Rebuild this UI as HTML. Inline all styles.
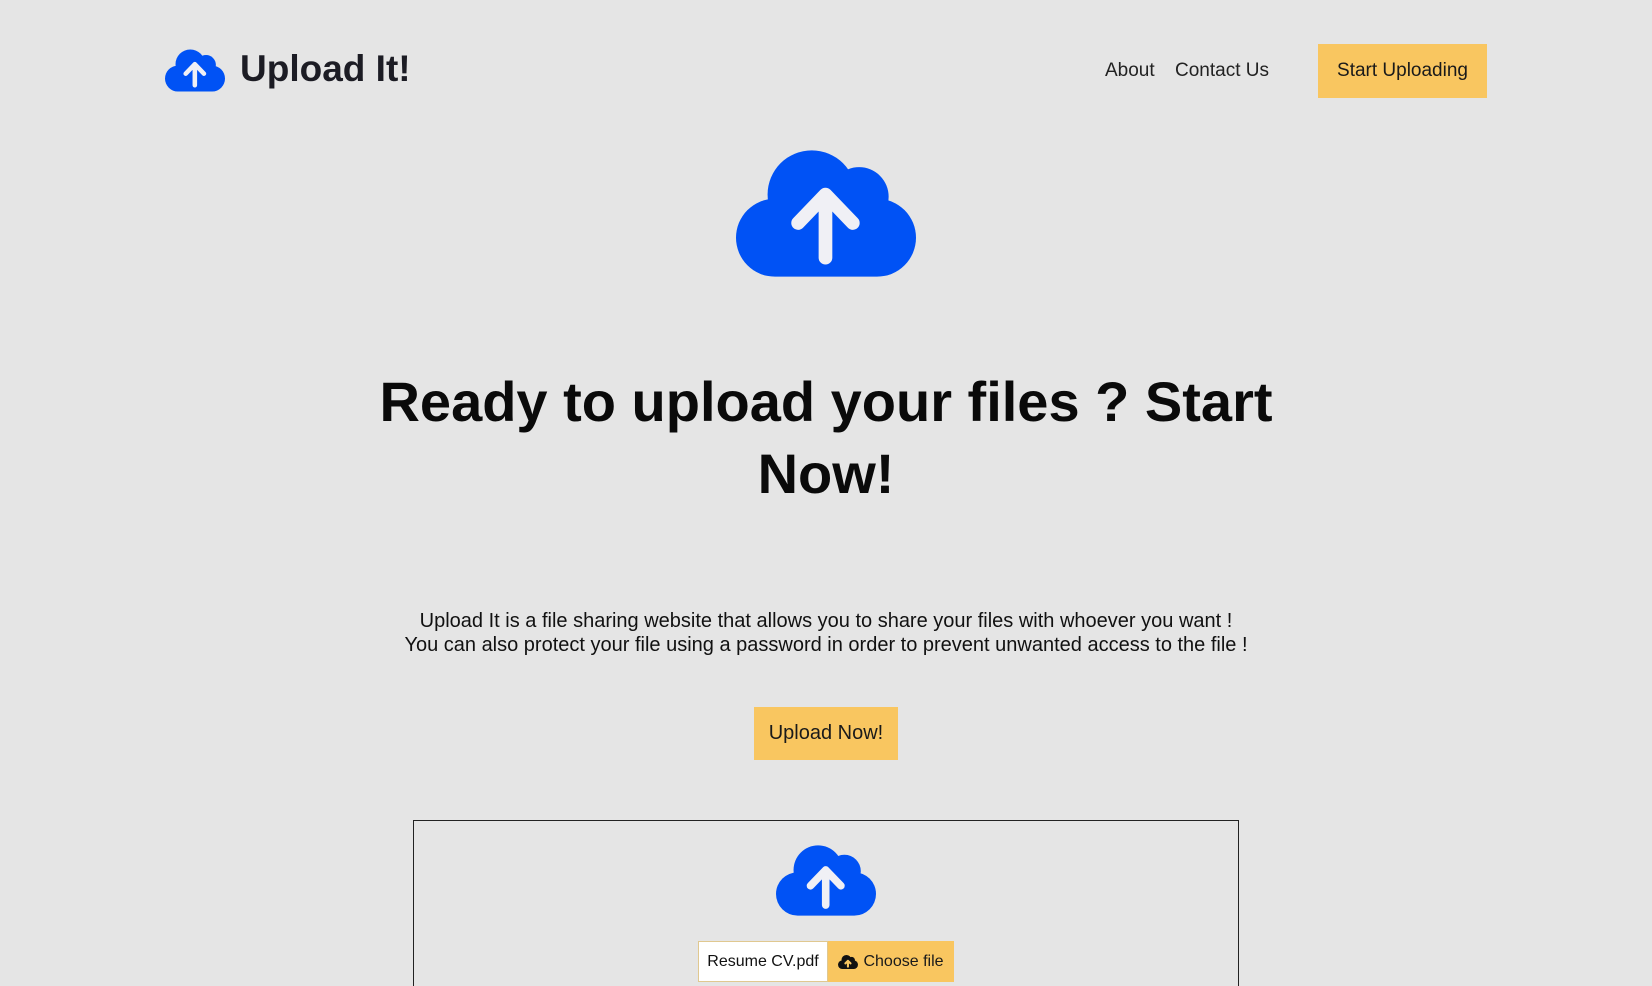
<!DOCTYPE html>
<html style="overflow:hidden;height:986px"><head><meta charset="utf-8"><style>
*{margin:0;padding:0;box-sizing:border-box}
body{width:1652px;height:986px;overflow:hidden;background:#e5e5e5;font-family:"Liberation Sans",Arial,sans-serif;color:#111;position:relative}
.a{position:absolute}
svg.c{position:absolute}
.btn{background:#f9c660;position:absolute;display:flex;align-items:center;justify-content:center;color:#1a1a1a}
</style></head><body>
<svg width="0" height="0" style="position:absolute"><defs>
<symbol id="cl" viewBox="0 0 171 120">
<circle cx="72" cy="42" r="42" fill="#0052f5"/>
<circle cx="117" cy="44" r="28" fill="#0052f5"/>
<rect x="0" y="46" width="171" height="74" rx="37" fill="#0052f5"/>
<path d="M85 102V42M59 69L85 42L111 69" stroke="#f0f0f5" stroke-width="13" stroke-linecap="round" stroke-linejoin="round" fill="none"/>
</symbol>
<symbol id="clb" viewBox="0 0 171 120">
<circle cx="72" cy="42" r="42" fill="#111"/>
<circle cx="117" cy="44" r="28" fill="#111"/>
<rect x="0" y="46" width="171" height="74" rx="37" fill="#111"/>
<path d="M85 100V50M63 72L85 50L107 72" stroke="#f9c660" stroke-width="18" stroke-linecap="round" stroke-linejoin="round" fill="none"/>
</symbol></defs></svg>

<svg class="c" style="left:165px;top:49px" width="60" height="43"><use href="#cl"/></svg>
<div class="a" style="left:240px;top:48px;font-size:37px;font-weight:bold;color:#1c1c24">Upload It!</div>
<div class="a" style="left:1105px;top:60px;font-size:19px;color:#222">About</div>
<div class="a" style="left:1175px;top:60px;font-size:19px;color:#222">Contact Us</div>
<div class="btn" style="left:1318px;top:44px;width:169px;height:54px;font-size:19px">Start Uploading</div>

<svg class="c" style="left:736px;top:150px" width="180" height="127"><use href="#cl"/></svg>

<div class="a" style="left:0;width:1652px;top:366px;text-align:center;font-size:56px;font-weight:bold;line-height:72px;color:#0a0a0a">Ready to upload your files ? Start<br>Now!</div>

<div class="a" style="left:0;width:1652px;top:609px;text-align:center;font-size:20px;line-height:24px;color:#111">Upload It is a file sharing website that allows you to share your files with whoever you want !<br>You can also protect your file using a password in order to prevent unwanted access to the file !</div>

<div class="btn" style="left:754px;top:707px;width:144px;height:53px;font-size:20px">Upload Now!</div>

<div class="a" style="left:413px;top:820px;width:826px;height:180px;border:1px solid #222"></div>
<svg class="c" style="left:776px;top:845px" width="100" height="71"><use href="#cl"/></svg>
<div class="a" style="left:698px;top:941px;width:130px;height:41px;background:#fff;border:1px solid #e0c890;font-size:16px;display:flex;align-items:center;justify-content:center">Resume CV.pdf</div>
<div class="btn" style="left:828px;top:941px;width:126px;height:41px;font-size:16px">
<svg width="20" height="14" style="margin-right:5px"><use href="#clb"/></svg>Choose file</div>
</body></html>
